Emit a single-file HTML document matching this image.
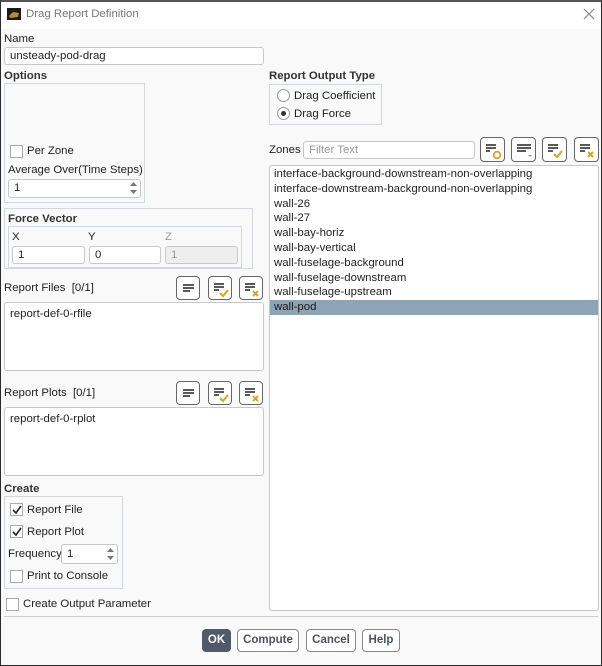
<!DOCTYPE html>
<html><head><meta charset="utf-8"><style>
*{box-sizing:border-box;margin:0;padding:0}
body{width:602px;height:666px;overflow:hidden;background:#fff;font-family:"Liberation Sans",sans-serif;font-size:11.4px;color:#222;position:relative}
.win{position:absolute;left:0;top:0;width:602px;height:666px;border:1px solid #2b2b2b;border-top:2px solid #555;background:#f9f9f9}
.title{position:absolute;left:0;top:0;width:600px;height:27px;background:#fff}
.a{position:absolute;white-space:nowrap}
.b{font-weight:bold;color:#333}
.inp{position:absolute;background:#fff;border:1px solid #c8c8c8;border-radius:3px;padding-left:5px;line-height:16px}
.box{position:absolute;border:1px solid #d2d8e0}
.cb{position:absolute;width:13px;height:13px;border:1px solid #aaa;background:#fff}
.rd{position:absolute;width:13px;height:13px;border:1px solid #999;border-radius:50%;background:#fff}
.ib{position:absolute;width:24px;height:24px;border:1px solid #666;border-radius:4px;background:#fff}
.ib svg{position:absolute;left:0;top:0}
.btn{position:absolute;top:629px;height:23px;border:1px solid #888;border-radius:4px;background:#fff;font-weight:bold;color:#4a5464;text-align:center;line-height:21px;font-size:11.5px}
.list div{height:14.8px;line-height:15px;padding-left:4px}
</style></head><body>
<div class="win">
<div class="title"></div>
</div>
<svg class="a" style="left:7px;top:8px" width="14" height="12"><rect width="14" height="12" fill="#1a1a1a"/><path d="M2 8 L6 4 L12 5 L11 9 L3 10Z" fill="#c08a2a"/></svg>
<div class="a" style="left:26px;top:8px;color:#777">Drag Report Definition</div>
<svg class="a" style="left:583px;top:8px" width="12" height="12"><path d="M1 1L11 11M11 1L1 11" stroke="#888" stroke-width="1.2"/></svg>

<div class="a" style="left:4px;top:33px">Name</div>
<div class="inp" style="left:4px;top:47px;width:260px;height:18px">unsteady-pod-drag</div>

<div class="a b" style="left:4px;top:70px">Options</div>
<div class="box" style="left:4px;top:83px;width:141px;height:120px"></div>
<div class="cb" style="left:10px;top:145px"></div>
<div class="a" style="left:27px;top:145px">Per Zone</div>
<div class="a" style="left:8px;top:164px">Average Over(Time Steps)</div>
<div class="inp" style="left:8px;top:179px;width:133px;height:19px;padding-left:5px">1</div>
<svg class="a" style="left:129px;top:181px" width="9" height="14"><path d="M1 5L4.5 1L8 5Z M1 9L4.5 13L8 9Z" fill="#777"/></svg>

<div class="box" style="left:4px;top:208px;width:249px;height:61px"></div>
<div class="a b" style="left:8px;top:213px">Force Vector</div>
<div class="box" style="left:8px;top:226px;width:234px;height:42px"></div>
<div class="a" style="left:12px;top:231px">X</div>
<div class="a" style="left:88px;top:231px">Y</div>
<div class="a" style="left:165px;top:231px;color:#999">Z</div>
<div class="inp" style="left:12px;top:246px;width:73px;height:18px">1</div>
<div class="inp" style="left:89px;top:246px;width:72px;height:18px">0</div>
<div class="inp" style="left:165px;top:246px;width:73px;height:18px;background:#eee;color:#999">1</div>

<div class="a" style="left:4px;top:282px">Report Files&nbsp;&nbsp;[0/1]</div>
<div class="ib" style="left:176px;top:276px"><svg width="24" height="24"><path d="M6 8h11M6 11h11M6 14h7" stroke="#222" stroke-width="1.6"/></svg></div>
<div class="ib" style="left:208px;top:276px"><svg width="24" height="24"><path d="M5 7h10M5 10h10M5 13h5" stroke="#222" stroke-width="1.6"/><path d="M11 16l3 3 5-6" stroke="#e0a020" stroke-width="2" fill="none"/></svg></div>
<div class="ib" style="left:239px;top:276px"><svg width="24" height="24"><path d="M5 7h10M5 10h10M5 13h5" stroke="#222" stroke-width="1.6"/><path d="M13 14l5 5M18 14l-5 5" stroke="#e0a020" stroke-width="2"/></svg></div>
<div class="inp" style="left:4px;top:302px;width:260px;height:69px;padding:3px 5px">report-def-0-rfile</div>

<div class="a" style="left:4px;top:387px">Report Plots&nbsp;&nbsp;[0/1]</div>
<div class="ib" style="left:176px;top:381px"><svg width="24" height="24"><path d="M6 8h11M6 11h11M6 14h7" stroke="#222" stroke-width="1.6"/></svg></div>
<div class="ib" style="left:208px;top:381px"><svg width="24" height="24"><path d="M5 7h10M5 10h10M5 13h5" stroke="#222" stroke-width="1.6"/><path d="M11 16l3 3 5-6" stroke="#e0a020" stroke-width="2" fill="none"/></svg></div>
<div class="ib" style="left:239px;top:381px"><svg width="24" height="24"><path d="M5 7h10M5 10h10M5 13h5" stroke="#222" stroke-width="1.6"/><path d="M13 14l5 5M18 14l-5 5" stroke="#e0a020" stroke-width="2"/></svg></div>
<div class="inp" style="left:4px;top:407px;width:260px;height:69px;padding:3px 5px">report-def-0-rplot</div>

<div class="a b" style="left:4px;top:483px">Create</div>
<div class="box" style="left:4px;top:496px;width:119px;height:93px"></div>
<div class="cb" style="left:10px;top:503px"></div>
<svg class="a" style="left:11px;top:504px" width="12" height="12"><path d="M2 6l3 3 5-7" stroke="#222" stroke-width="1.6" fill="none"/></svg>
<div class="a" style="left:27px;top:504px">Report File</div>
<div class="cb" style="left:10px;top:525px"></div>
<svg class="a" style="left:11px;top:526px" width="12" height="12"><path d="M2 6l3 3 5-7" stroke="#222" stroke-width="1.6" fill="none"/></svg>
<div class="a" style="left:27px;top:526px">Report Plot</div>
<div class="a" style="left:8px;top:548px">Frequency</div>
<div class="inp" style="left:61px;top:544px;width:57px;height:20px;line-height:18px">1</div>
<svg class="a" style="left:106px;top:547px" width="9" height="14"><path d="M1 5L4.5 1L8 5Z M1 9L4.5 13L8 9Z" fill="#777"/></svg>
<div class="cb" style="left:10px;top:570px"></div>
<div class="a" style="left:27px;top:570px">Print to Console</div>
<div class="cb" style="left:6px;top:598px"></div>
<div class="a" style="left:23px;top:598px">Create Output Parameter</div>

<div class="a b" style="left:269px;top:70px">Report Output Type</div>
<div class="box" style="left:269px;top:84px;width:113px;height:41px"></div>
<div class="rd" style="left:277px;top:89px"></div>
<div class="a" style="left:294px;top:90px">Drag Coefficient</div>
<div class="rd" style="left:277px;top:107px"></div>
<div class="a" style="left:281px;top:111px;width:5px;height:5px;border-radius:50%;background:#333"></div>
<div class="a" style="left:294px;top:108px">Drag Force</div>

<div class="a" style="left:269px;top:144px">Zones</div>
<div class="inp" style="left:303px;top:141px;width:172px;height:18px;color:#999">Filter Text</div>
<div class="ib" style="left:480px;top:137px;width:25px;height:25px"><svg width="25" height="25"><path d="M5 7h10M5 10h10M5 13h4" stroke="#222" stroke-width="1.6"/><circle cx="16" cy="17" r="3.3" stroke="#e0a020" stroke-width="1.8" fill="none"/></svg></div>
<div class="ib" style="left:511px;top:137px;width:25px;height:25px"><svg width="25" height="25"><path d="M5 7h14M5 10h14M5 13h9" stroke="#222" stroke-width="1.6"/><path d="M16 17h4l-2 2z" fill="#999"/></svg></div>
<div class="ib" style="left:542px;top:137px;width:25px;height:25px"><svg width="25" height="25"><path d="M5 7h10M5 10h10M5 13h5" stroke="#222" stroke-width="1.6"/><path d="M11 16l3 3 5-6" stroke="#e0a020" stroke-width="2" fill="none"/></svg></div>
<div class="ib" style="left:574px;top:137px;width:25px;height:25px"><svg width="25" height="25"><path d="M5 7h10M5 10h10M5 13h5" stroke="#222" stroke-width="1.6"/><path d="M13 14l5 5M18 14l-5 5" stroke="#e0a020" stroke-width="2"/></svg></div>

<div class="inp list" style="left:269px;top:165px;width:330px;height:446px;padding:1px 0 0 0">
<div>interface-background-downstream-non-overlapping</div>
<div>interface-downstream-background-non-overlapping</div>
<div>wall-26</div>
<div>wall-27</div>
<div>wall-bay-horiz</div>
<div>wall-bay-vertical</div>
<div>wall-fuselage-background</div>
<div>wall-fuselage-downstream</div>
<div>wall-fuselage-upstream</div>
<div style="background:#8fa3b7;color:#1a1a1a">wall-pod</div>
</div>

<div class="a" style="left:4px;top:616px;width:594px;height:1px;background:#ccc"></div>
<div class="btn" style="left:202px;width:29px;background:#4f5b6b;border-color:#4f5b6b;color:#fff">OK</div>
<div class="btn" style="left:237px;width:62px">Compute</div>
<div class="btn" style="left:306px;width:50px">Cancel</div>
<div class="btn" style="left:362px;width:38px">Help</div>
</body></html>
